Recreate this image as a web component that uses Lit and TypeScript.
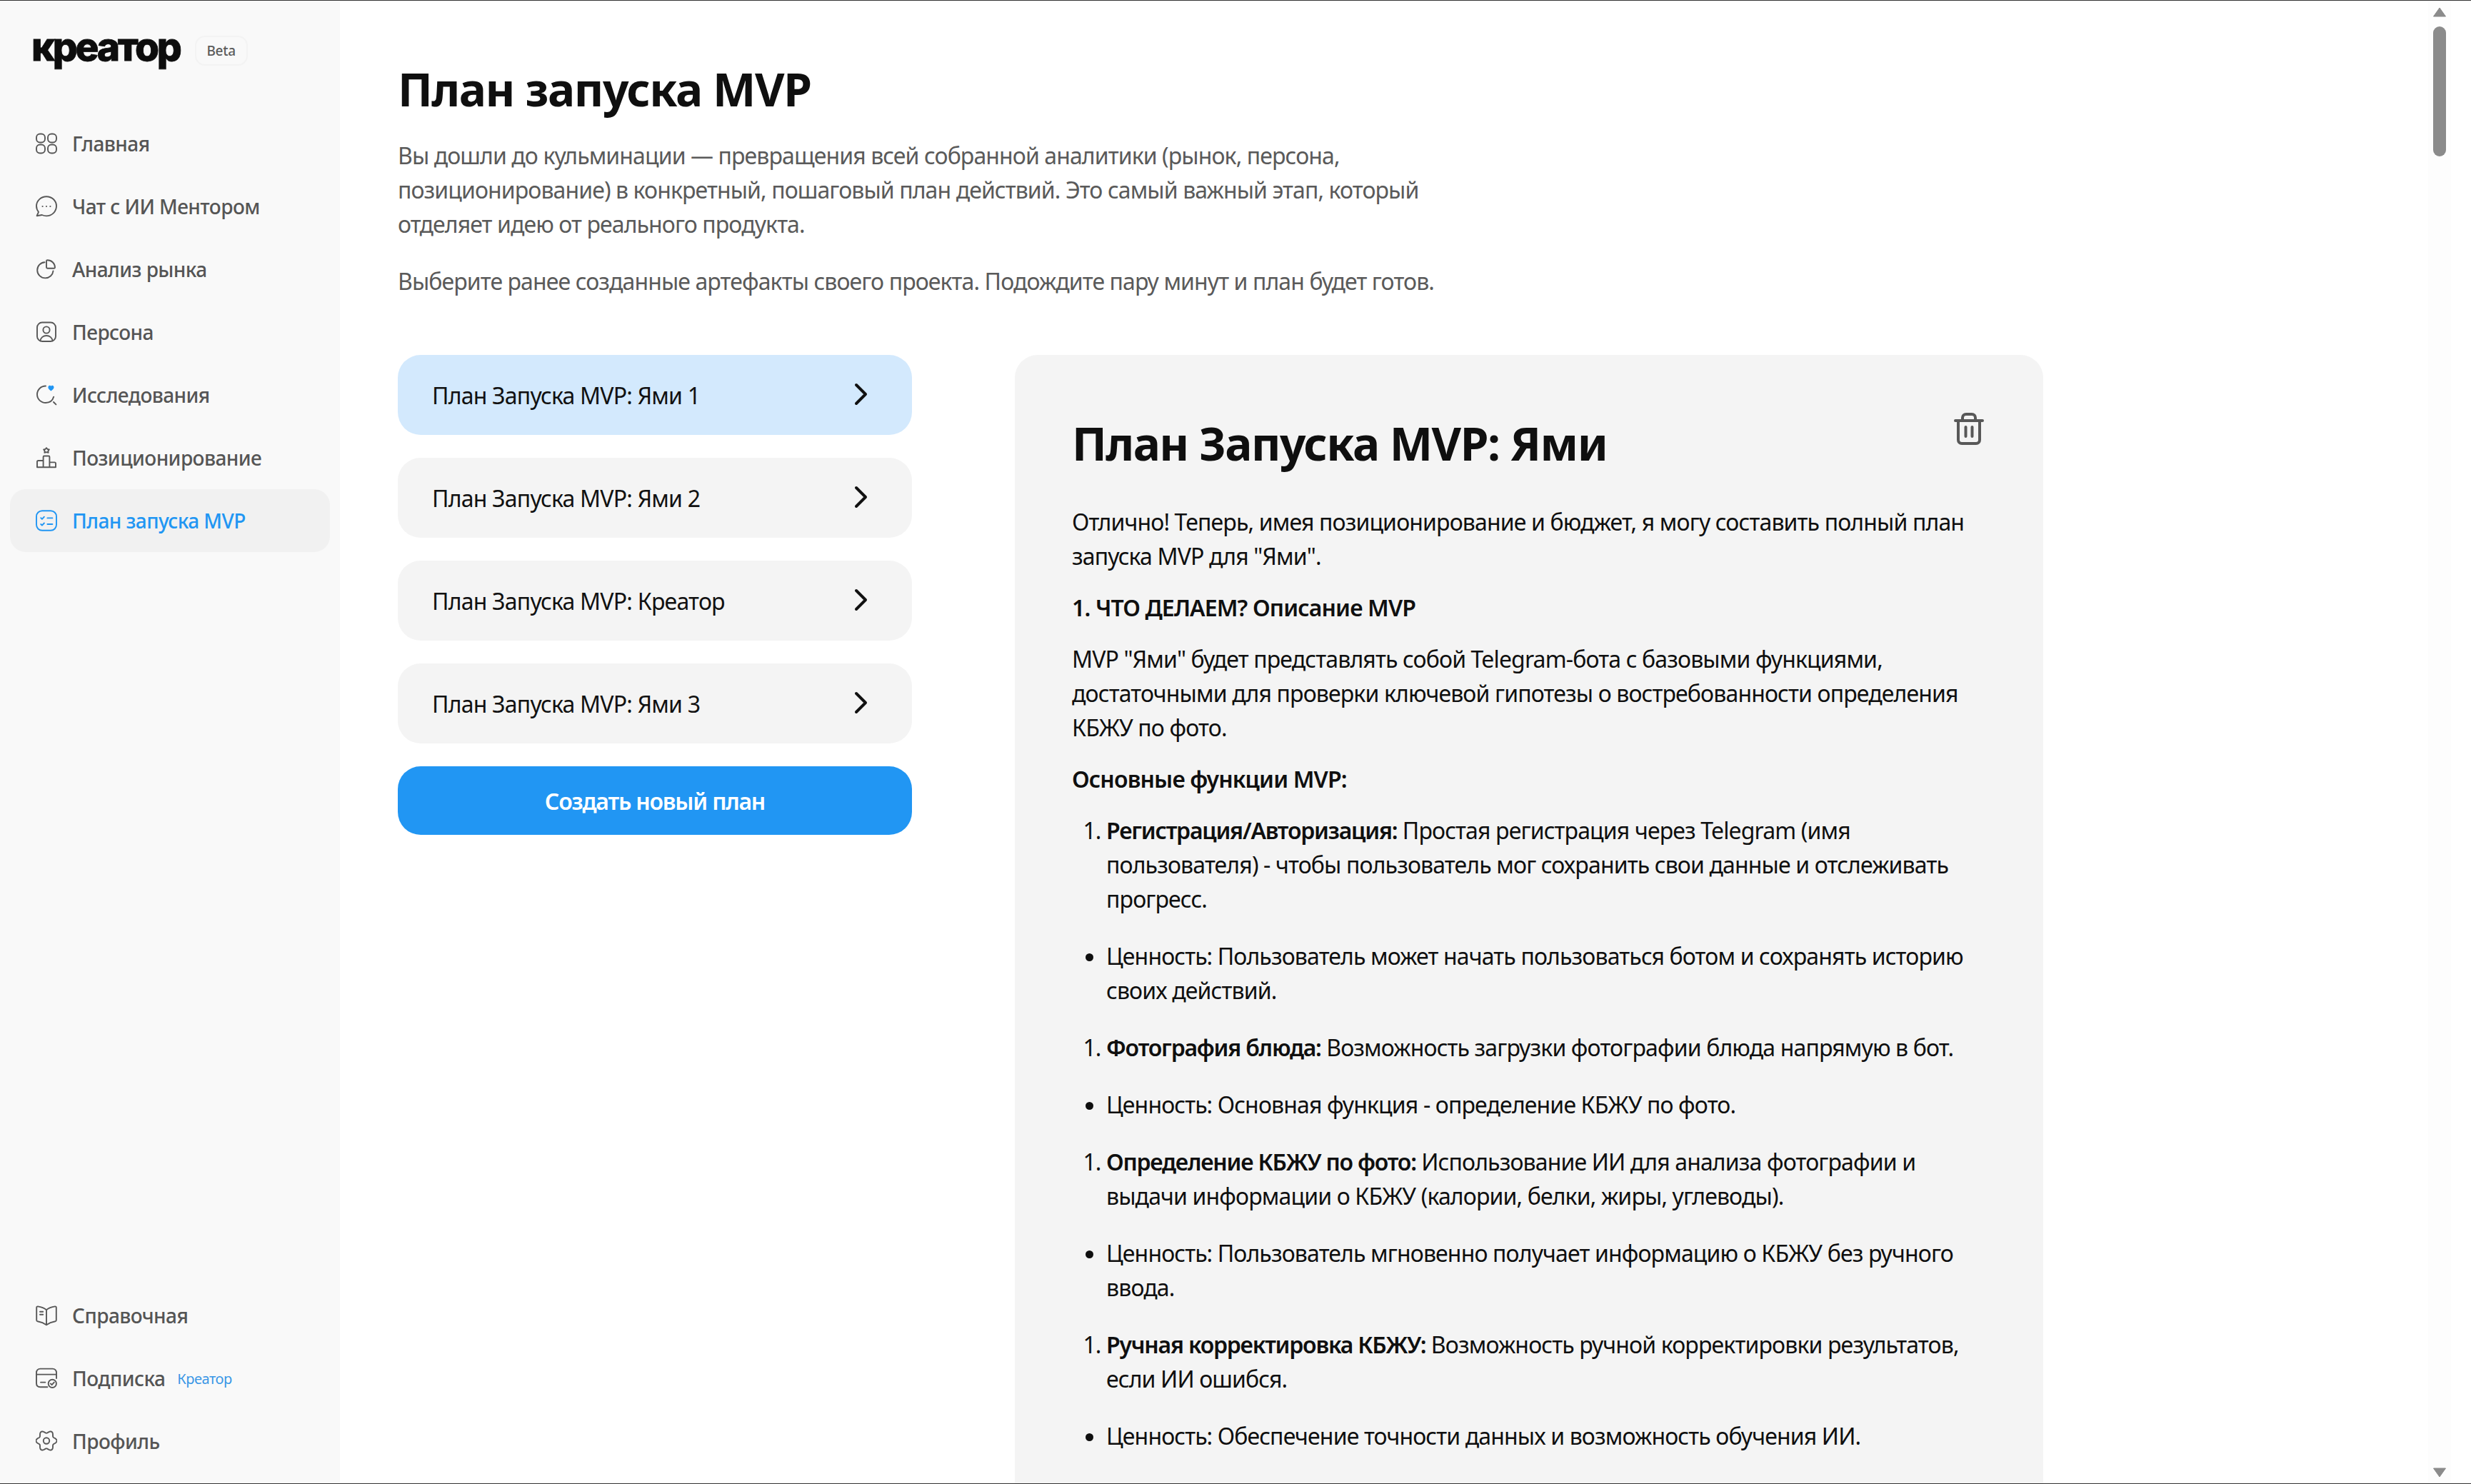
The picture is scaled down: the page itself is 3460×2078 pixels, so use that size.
import { LitElement, html, css, svg } from "lit";
import { customElement } from "lit/decorators.js";

const G = "#585858";
const B = "#2196f3";

const gearPath = (() => {
  const pts: string[] = [];
  for (let i = 0; i < 180; i++) {
    const t = (i / 180) * Math.PI * 2;
    const r = 12.7 + 1.9 * Math.cos(6 * t);
    pts.push(`${(15 + r * Math.cos(t)).toFixed(2)} ${(14.5 + r * Math.sin(t)).toFixed(2)}`);
  }
  return "M" + pts.join("L") + "Z";
})();

const icons: Record<string, unknown> = {
  home: svg`<g fill="none" stroke=${G} stroke-width="1.9"><rect x="1" y="1.5" width="12" height="12" rx="5"/><rect x="17" y="1.5" width="12" height="12" rx="5"/><rect x="1" y="16.5" width="12" height="12" rx="5"/><rect x="17" y="16.5" width="12" height="12" rx="5"/></g>`,
  chat: svg`<g fill="none" stroke=${G} stroke-width="1.9" stroke-linejoin="round"><path d="M15 1.2C7.3 1.2 1 7.2 1 14.6c0 3.1 1.1 6 3 8.2L1.6 28.2l7.2-1.2c1.9.9 4 1.4 6.2 1.4 7.7 0 14-6.1 14-13.8S22.7 1.2 15 1.2Z"/></g><g fill=${G}><circle cx="9.6" cy="15" r="1.1"/><circle cx="15" cy="15" r="1.1"/><circle cx="20.4" cy="15" r="1.1"/></g>`,
  pie: svg`<g fill="none" stroke=${G} stroke-width="1.9" stroke-linejoin="round" stroke-linecap="round"><path d="M12.5 5.2C6.8 5.6 2.2 10.4 2.2 16.2c0 6.2 5 11.2 11.2 11.2 5.8 0 10.5-4.3 11.1-10"/><path d="M16.4 2.2c5.8 0 10.6 4.6 10.6 10.4 0 .7-.5 1.2-1.2 1.2H16.8c-1.1 0-1.8-.8-1.8-1.8V3.4c0-.7.6-1.2 1.4-1.2Z"/></g>`,
  persona: svg`<g fill="none" stroke=${G} stroke-width="1.9" stroke-linecap="round"><rect x="2" y="1.5" width="26" height="26.5" rx="7"/><circle cx="15" cy="12" r="4.6"/><path d="M6.4 27.4c.6-4.8 4.2-7.4 8.6-7.4s8 2.6 8.6 7.4"/></g>`,
  research: svg`<g fill="none" stroke=${G} stroke-width="1.9" stroke-linecap="round"><path d="M14 2.500C7.200 2.500 2 7.800 2 14.300S7.200 26 14 26c5.600 0 9.800-3.400 11.200-8.400"/><path d="M25 25l3.400 3.400"/></g><path fill=${B} d="M21.400 7.600c-2.300-1.500-4-3-4-5 0-1.500 1.100-2.400 2.200-2.400 1 0 1.600.5 1.800 1.100.3-.6.9-1.100 1.900-1.100 1.100 0 2.200.9 2.200 2.400 0 2-1.800 3.500-4.100 5Z" transform="translate(0 1.6) scale(1 1.05)"/>`,
  podium: svg`<g fill="none" stroke=${G} stroke-width="1.9" stroke-linejoin="round" stroke-linecap="round"><path d="M2 28.200V20.600c0-1 .7-1.600 1.600-1.600H10.600M10.600 28.200V13.800c0-.7.6-1.300 1.300-1.300h6.200c.7 0 1.300.6 1.300 1.300v14.400M19.400 21.400h7c.9 0 1.600.7 1.600 1.600v5.200H2"/><path d="M15 1.200l1.500 1.800 2.300.5-1.400 2 .2 2.400-2.600-.8-2.600.8.2-2.400-1.400-2 2.300-.5Z"/></g>`,
  plan: svg`<g fill="none" stroke=${B} stroke-width="1.9" stroke-linecap="round" stroke-linejoin="round"><rect x="1" y="1.200" width="28" height="27.600" rx="8"/><path d="M7.200 11.200l1.700 1.700 3-3.200M7.200 20l1.700 1.700 3-3.200M16.400 11.400h7M16.400 20h7"/></g>`,
  book: svg`<g fill="none" stroke=${G} stroke-width="1.9" stroke-linejoin="round" stroke-linecap="round"><path d="M15 7.200c-3-2.600-7.800-4.200-12-4.800-1-.1-1.800.6-1.800 1.600v17.400c0 1 .6 1.700 1.500 1.900 4 .7 8.800 2.400 12.300 5 3.500-2.600 8.300-4.300 12.300-5 .9-.2 1.500-.9 1.500-1.900V4c0-1-.8-1.700-1.800-1.600-4.200.6-9 2.200-12 4.800Zm0 0v20.100"/><path d="M6 9.800h4.200M6 13.800h4.200"/></g>`,
  card: svg`<g fill="none" stroke=${G} stroke-width="1.9" stroke-linejoin="round" stroke-linecap="round"><path d="M29 15V7c0-3.200-2.200-5.400-5.400-5.400H6.400C3.200 1.600 1 3.800 1 7v15c0 3.200 2.200 5.200 5.400 5.200h10"/><path d="M1 9.600h28M7 20.600h6.400"/><circle cx="23.300" cy="22.400" r="5.600"/><path d="M20.800 22.400l1.800 1.800 3.200-3.600"/></g>`,
  gear: svg`<g fill="none" stroke=${G} stroke-width="1.9" stroke-linejoin="round"><circle cx="15" cy="14.500" r="4.200"/><path d=${gearPath}/></g>`,
};

const top = [
  ["home", "Главная"],
  ["chat", "Чат с ИИ Ментором"],
  ["pie", "Анализ рынка"],
  ["persona", "Персона"],
  ["research", "Исследования"],
  ["podium", "Позиционирование"],
  ["plan", "План запуска MVP"],
];

const plans = ["План Запуска MVP: Ями 1", "План Запуска MVP: Ями 2", "План Запуска MVP: Креатор", "План Запуска MVP: Ями 3"];

@customElement("app-root")
export class AppRoot extends LitElement {
  static styles = css`
    :host {
      display: flex;
      flex-direction: column;
      height: 2078px;
      width: 3460px;
      overflow: hidden;
      position: relative;
      background: #fff;
      font-family: "Noto Sans", "Open Sans", sans-serif;
      border-top: 1px solid #333;
      border-bottom: 1px solid #333;
      box-sizing: border-box;
    }
    .row { display: flex; flex: 1; min-height: 0; }
    .side {
      width: 476px;
      flex: none;
      background: #f9f9f9;
      display: flex;
      flex-direction: column;
      padding: 0 14px 15px;
      box-sizing: border-box;
    }
    .brand { display: flex; align-items: center; height: 156px; padding: 0 0 16px 30px; box-sizing: border-box; }
    .logo {
      font-family: Inter, sans-serif;
      font-weight: 800;
      font-size: 55px;
      letter-spacing: -3.3px;
      color: #0d0d0d;
      line-height: 1;
      margin-bottom: 12px;
      -webkit-text-stroke: 0.8px #0d0d0d;
    }
    .beta {
      margin-left: 21px;
      width: 74px;
      height: 42px;
      border: 2px solid #f3f3f3;
      border-radius: 14px;
      box-sizing: border-box;
      font-size: 19px;
      font-weight: 500;
      letter-spacing: -0.3px;
      color: #5c5c5c;
      display: flex;
      align-items: center;
      justify-content: center;
    }
    .nav { display: flex; flex-direction: column; }
    .nav.bottom { margin-top: auto; }
    .item {
      height: 88px;
      display: flex;
      align-items: center;
      padding-left: 36px;
      border-radius: 22px;
      font-size: 28px;
      font-weight: 500;
      letter-spacing: -0.55px;
      color: #555;
      white-space: nowrap;
    }
    .item.active { background: #f1f1f1; color: #2196f3; }
    .item svg { width: 30px; height: 30px; margin-right: 21px; flex: none; }
    .tag { font-size: 20px; font-weight: 400; color: #3a97e6; margin-left: 17px; letter-spacing: -0.5px; }
    .main { flex: 1; min-width: 0; padding: 0 0 0 81px; }
    h1 {
      margin: 0;
      padding-top: 88px;
      font-size: 64px;
      line-height: 72px;
      font-weight: 700;
      letter-spacing: -1.4px;
      color: #0f0f0f;
      white-space: nowrap;
    }
    .lead {
      margin: 33px 0 0;
      font-size: 32px;
      line-height: 48px;
      color: #5a5a5a;
      letter-spacing: -0.9px;
      white-space: nowrap;
    }
    .lead + .lead { margin-top: 32px; }
    .cols { display: flex; align-items: flex-start; margin-top: 79px; gap: 144px; }
    .list { width: 720px; flex: none; display: flex; flex-direction: column; gap: 32px; }
    .plan {
      height: 112px;
      border-radius: 32px;
      background: #f4f4f4;
      display: flex;
      align-items: center;
      justify-content: space-between;
      padding: 0 48px;
      box-sizing: border-box;
      font-size: 32px;
      letter-spacing: -0.78px;
      color: #111;
    }
    .plan.on { background: #d3e9fd; }
    .plan svg { width: 24px; height: 36px; margin-top: -2px; margin-right: 11px; }
    .cta {
      height: 96px;
      border-radius: 32px;
      background: #2196f3;
      color: #fff;
      font-size: 32px;
      font-weight: 600;
      letter-spacing: -1.2px;
      display: flex;
      align-items: center;
      justify-content: center;
    }
    .panel {
      width: 1440px;
      flex: none;
      background: #f4f4f4;
      border-radius: 32px 32px 0 0;
      padding: 80px 80px 0;
      box-sizing: border-box;
      position: relative;
      color: #0f0f0f;
      font-size: 32px;
      line-height: 48px;
      letter-spacing: -0.86px;
      white-space: nowrap;
      height: 1600px;
    }
    .trash { position: absolute; top: 80px; right: 83px; width: 42px; height: 46px; }
    h2 {
      margin: 0 0 42px;
      font-size: 64px;
      line-height: 88px;
      font-weight: 700;
      letter-spacing: -1.5px;
      color: #0f0f0f;
    }
    .panel p { margin: 0 0 24px; }
    .panel b { font-weight: 600; }
    .panel ol b { letter-spacing: -1.22px; }
    .panel ol, .panel ul { margin: 0 0 32px; padding: 0 0 0 48px; }
    .scroll { position: absolute; top: 0; right: 0; width: 60px; bottom: 0; pointer-events: none; }
    .track { position: absolute; left: 0; top: 0; bottom: 0; width: 32px; background: #fdfdfd; }
    .thumb { position: absolute; left: 7px; top: 36px; width: 18px; height: 182px; border-radius: 9px; background: #8b8b8b; }
    .arrow { position: absolute; left: 7px; width: 18px; height: 14px; }
    .arrow.up { top: 9px; }
    .arrow.down { bottom: 8px; }
  `;

  render() {
    const nav = (ic: string, label: string, active = false, tag = "") => html`
      <div class="item ${active ? "active" : ""}">
        <svg viewBox="0 0 30 30">${icons[ic]}</svg>${label}${tag ? html`<span class="tag">${tag}</span>` : ""}
      </div>`;
    return html`
      <div class="row">
        <aside class="side">
          <div class="brand"><span class="logo">креатор</span><span class="beta">Beta</span></div>
          <nav class="nav">${top.map(([i, l], n) => nav(i, l, n === 6))}</nav>
          <nav class="nav bottom">
            ${nav("book", "Справочная")}
            ${nav("card", "Подписка", false, "Креатор")}
            ${nav("gear", "Профиль")}
          </nav>
        </aside>
        <main class="main">
          <h1>План запуска MVP</h1>
          <p class="lead">Вы дошли до кульминации — превращения всей собранной аналитики (рынок, персона,<br />позиционирование) в конкретный, пошаговый план действий. Это самый важный этап, который<br />отделяет идею от реального продукта.</p>
          <p class="lead">Выберите ранее созданные артефакты своего проекта. Подождите пару минут и план будет готов.</p>
          <div class="cols">
            <div class="list">
              ${plans.map((p, i) => html`<div class="plan ${i === 0 ? "on" : ""}">${p}
                <svg viewBox="0 0 24 36"><path d="M5 5l13 13L5 31" fill="none" stroke="#111" stroke-width="4" stroke-linecap="round" stroke-linejoin="round"/></svg></div>`)}
              <div class="cta">Создать новый план</div>
            </div>
            <article class="panel">
              <svg class="trash" viewBox="0 0 42 46"><g fill="none" stroke="#585858" stroke-width="4" stroke-linecap="round" stroke-linejoin="round"><path d="M2 12h38M6 12v27c0 3 2 5 5 5h20c3 0 5-2 5-5V12M12 12V8c0-3 2-5 5-5h8c3 0 5 2 5 5v4M16.500 21v13M25.500 21v13"/></g></svg>
              <h2>План Запуска MVP: Ями</h2>
              <p>Отлично! Теперь, имея позиционирование и бюджет, я могу составить полный план<br />запуска MVP для "Ями".</p>
              <p><b>1. ЧТО ДЕЛАЕМ? Описание MVP</b></p>
              <p>MVP "Ями" будет представлять собой Telegram-бота с базовыми функциями,<br />достаточными для проверки ключевой гипотезы о востребованности определения<br />КБЖУ по фото.</p>
              <p><b>Основные функции MVP:</b></p>
              <ol><li><b>Регистрация/Авторизация:</b> Простая регистрация через Telegram (имя<br />пользователя) - чтобы пользователь мог сохранить свои данные и отслеживать<br />прогресс.</li></ol>
              <ul><li>Ценность: Пользователь может начать пользоваться ботом и сохранять историю<br />своих действий.</li></ul>
              <ol><li><b>Фотография блюда:</b> Возможность загрузки фотографии блюда напрямую в бот.</li></ol>
              <ul><li>Ценность: Основная функция - определение КБЖУ по фото.</li></ul>
              <ol><li><b>Определение КБЖУ по фото:</b> Использование ИИ для анализа фотографии и<br />выдачи информации о КБЖУ (калории, белки, жиры, углеводы).</li></ol>
              <ul><li>Ценность: Пользователь мгновенно получает информацию о КБЖУ без ручного<br />ввода.</li></ul>
              <ol><li><b>Ручная корректировка КБЖУ:</b> Возможность ручной корректировки результатов,<br />если ИИ ошибся.</li></ol>
              <ul><li>Ценность: Обеспечение точности данных и возможность обучения ИИ.</li></ul>
            </article>
          </div>
        </main>
      </div>
      <div class="scroll">
        <div class="track"></div>
        <svg class="arrow up" viewBox="0 0 18 14"><path d="M9 1L17.500 13H.5Z" fill="#8b8b8b" stroke="#8b8b8b" stroke-linejoin="round"/></svg>
        <div class="thumb"></div>
        <svg class="arrow down" viewBox="0 0 18 14"><path d="M9 13L17.500 1H.5Z" fill="#8b8b8b" stroke="#8b8b8b" stroke-linejoin="round"/></svg>
      </div>
    `;
  }
}
